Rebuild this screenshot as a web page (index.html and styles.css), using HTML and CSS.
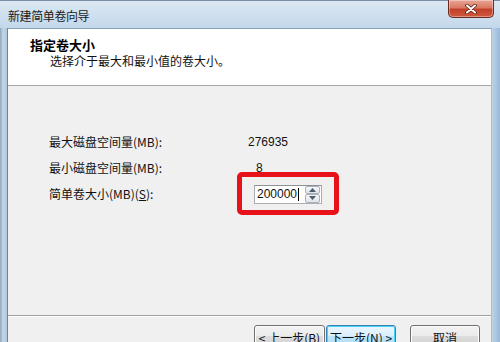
FILE: index.html
```html
<!DOCTYPE html>
<html>
<head>
<meta charset="utf-8">
<link rel="stylesheet" href="styles.css">
</head>
<body>
<div class="window">
  <div class="titlebar">
    <span class="title">新建简单卷向导</span>
    <div class="close">
      <svg width="14" height="10" viewBox="0 0 14 10"><path d="M3 1.5 L11 8.5 M11 1.5 L3 8.5" stroke="#5a1e14" stroke-width="3.6" stroke-linecap="round"/><path d="M3 1.5 L11 8.5 M11 1.5 L3 8.5" stroke="#ffffff" stroke-width="2" stroke-linecap="round"/></svg>
    </div>
  </div>
  <div class="client">
    <div class="header">
      <div class="h-title">指定卷大小</div>
      <div class="h-sub">选择介于最大和最小值的卷大小。</div>
    </div>
    <div class="body">
      <div class="form">
        <div class="label">最大磁盘空间量(MB):</div>
        <div class="value value-wide">276935</div>
        <div class="label">最小磁盘空间量(MB):</div>
        <div class="value">8</div>
        <div class="label">简单卷大小(MB)(<u>S</u>):</div>
        <div class="value field-cell">
          <div class="input">
            <span class="input-text">200000</span><span class="caret"></span>
            <div class="spin">
              <div class="spin-btn"><svg width="7" height="4" viewBox="0 0 7 4"><path d="M0 4 L3.5 0 L7 4 Z" fill="#4d5a6a"/></svg></div>
              <div class="spin-btn"><svg width="7" height="4" viewBox="0 0 7 4"><path d="M0 0 L3.5 4 L7 0 Z" fill="#4d5a6a"/></svg></div>
            </div>
          </div>
          <div class="highlight"></div>
        </div>
      </div>
    </div>
    <div class="footer">
      <div class="btn">&lt; 上一步(<u>B</u>)</div>
      <div class="btn btn-focus">下一步(<u>N</u>) &gt;</div>
      <div class="btn btn-cancel">取消</div>
    </div>
  </div>
</div>
</body>
</html>
```
FILE: styles.css
```css
html, body {
  margin: 0;
  padding: 0;
  width: 500px;
  height: 342px;
  overflow: hidden;
}
body {
  font-family: "Noto Sans CJK SC", "Liberation Sans", sans-serif;
  font-size: 12px;
  color: #111;
}
.window {
  width: 500px;
  height: 342px;
  display: flex;
  flex-direction: column;
  background: linear-gradient(90deg, #8ea6be 0px, #c3d5e6 3px, #b3c8dc 7px, #c9dcee 60%, #c6daec 98%, #9ab8d8 100%);
  overflow: hidden;
}
.titlebar {
  height: 28px;
  flex: none;
  display: flex;
  align-items: center;
  padding-left: 8px;
  position: relative;
  background: linear-gradient(180deg, #dbe7f2 0%, #cfe0ef 50%, #c3d8ec 100%);
  border-top: 1px solid #7d8fa3;
  box-sizing: border-box;
}
.title {
  font-size: 12px;
  color: #1a1a1a;
  letter-spacing: -0.4px;
  padding-top: 1px;
}
.close {
  position: absolute;
  top: -1px;
  right: 6px;
  width: 46px;
  height: 18px;
  box-sizing: border-box;
  border: 1px solid #6b2a20;
  border-top: none;
  border-radius: 0 0 5px 5px;
  background: linear-gradient(180deg, #e9a595 0%, #d97a63 45%, #c2412a 55%, #cf5a3c 100%);
  display: flex;
  align-items: center;
  justify-content: center;
  box-shadow: inset 0 0 0 1px rgba(255,255,255,0.35);
}
.client {
  flex: 1;
  margin: 0 8px 0 7px;
  border-left: 1px solid #6e8296;
  border-right: 1px solid #a9bfd4;
  border-top: 1px solid #8aa0b6;
  background: #f0f0f0;
  display: flex;
  flex-direction: column;
  min-height: 0;
}
.header {
  height: 57px;
  flex: none;
  background: #ffffff;
  border-bottom: 1px solid #a8a8a8;
  box-sizing: border-box;
  padding: 8px 0 0 22px;
}
.h-title {
  font-weight: bold;
  font-size: 13px;
  line-height: 16px;
  color: #000;
}
.h-sub {
  font-size: 12px;
  line-height: 15px;
  margin: 0 0 0 20px;
  color: #111;
}
.body {
  height: 229px;
  flex: none;
  box-sizing: border-box;
  padding: 43px 0 0 41px;
}
.form {
  display: grid;
  grid-template-columns: 205px 1fr;
  grid-auto-rows: 26px;
  align-items: center;
}
.label {
  line-height: 16px;
  white-space: nowrap;
}
.value {
  line-height: 16px;
  font-family: "Liberation Sans", sans-serif;
  font-size: 12px;
  padding-left: 2px;
}
.value-wide {
  margin-left: -8px;
}
.field-cell {
  position: relative;
  padding-left: 0;
  height: 26px;
  display: flex;
  align-items: center;
}
.input {
  width: 68px;
  height: 19px;
  box-sizing: border-box;
  background: #fff;
  border: 1px solid #abadb3;
  border-top-color: #8e9297;
  display: flex;
  align-items: center;
  padding-left: 2px;
  position: relative;
}
.input-text {
  font-family: "Liberation Sans", sans-serif;
  font-size: 12px;
  line-height: 14px;
}
.caret {
  width: 1px;
  height: 13px;
  background: #000;
  margin-left: 1px;
}
.spin {
  position: absolute;
  right: 1px;
  top: 0px;
  width: 15px;
  height: 17px;
  display: flex;
  flex-direction: column;
}
.spin-btn {
  flex: 1;
  box-sizing: border-box;
  border: 1px solid #a9b2bd;
  border-radius: 2px;
  background: linear-gradient(180deg, #f6f7f9, #dfe3e8);
  display: flex;
  align-items: center;
  justify-content: center;
}
.highlight {
  position: absolute;
  left: -17px;
  top: -9px;
  width: 102px;
  height: 43px;
  box-sizing: border-box;
  border: 5px solid #e8121a;
  border-radius: 5px;
}
.footer {
  flex: 1;
  border-top: 1px solid #a0a0a0;
  box-shadow: inset 0 1px 0 #ffffff;
  display: flex;
  align-items: flex-start;
  padding: 9px 0 0 246px;
  min-height: 0;
}
.btn {
  width: 71px;
  height: 23px;
  box-sizing: border-box;
  border: 1px solid #707070;
  border-radius: 3px;
  background: linear-gradient(180deg, #f2f2f2 0%, #ebebeb 49%, #dddddd 50%, #cfcfcf 100%);
  box-shadow: inset 0 0 0 1px #fcfcfc;
  display: flex;
  align-items: center;
  justify-content: center;
  font-size: 12px;
  line-height: 14px;
  white-space: nowrap;
  padding-top: 2px;
}
.btn-focus {
  margin-left: 1px;
  width: 70px;
  border-color: #3c7fb1;
  background: linear-gradient(180deg, #eaf6fd 0%, #d9f0fc 49%, #bee6fd 50%, #a7d9f5 100%);
  box-shadow: inset 0 0 0 1px #48d2f8;
}
.btn-cancel {
  margin-left: 14px;
  width: 70px;
}
u {
  text-decoration: underline;
  text-underline-offset: 1px;
}
```
